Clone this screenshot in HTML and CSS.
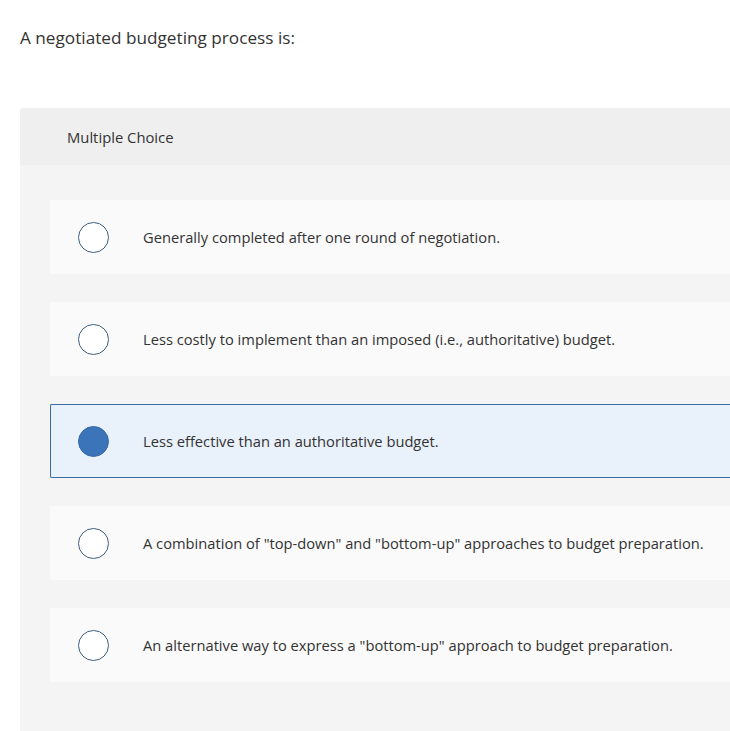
FILE: index.html
```html
<!DOCTYPE html>
<html>
<head>
<meta charset="utf-8">
<link rel="stylesheet" href="styles.css">
</head>
<body>
<p class="question">A negotiated budgeting process is:</p>
<section class="panel">
  <header class="panel-head">Multiple Choice</header>
  <div class="choices">
    <div class="choice"><span class="radio"></span><span class="label">Generally completed after one round of negotiation.</span></div>
    <div class="choice"><span class="radio"></span><span class="label">Less costly to implement than an imposed (i.e., authoritative) budget.</span></div>
    <div class="choice selected"><span class="radio"></span><span class="label">Less effective than an authoritative budget.</span></div>
    <div class="choice"><span class="radio"></span><span class="label">A combination of "top-down" and "bottom-up" approaches to budget preparation.</span></div>
    <div class="choice"><span class="radio"></span><span class="label">An alternative way to express a "bottom-up" approach to budget preparation.</span></div>
  </div>
</section>
</body>
</html>
```
FILE: styles.css
```css
html, body {
  margin: 0;
  padding: 0;
  background: #ffffff;
  font-family: "Open Sans", "Liberation Sans", sans-serif;
  color: #333333;
}
.question {
  margin: 26px 0 0 20px;
  font-size: 17.2px;
  line-height: 24px;
}
.panel {
  margin: 58px 0 0 20px;
  background: #f4f4f4;
  border-radius: 3px 0 0 0;
  padding-bottom: 60px;
}
.panel-head {
  height: 57px;
  display: flex;
  align-items: center;
  padding-left: 47px;
  background: #efefef;
  font-size: 14.8px;
  border-radius: 3px 0 0 0;
}
.choices {
  display: flex;
  flex-direction: column;
  gap: 28px;
  padding: 35px 0 0 30px;
}
.choice {
  height: 74px;
  box-sizing: border-box;
  display: flex;
  align-items: center;
  background: #fafafa;
  padding-left: 28px;
  font-size: 14.7px;
  border-radius: 2px 0 0 2px;
  white-space: nowrap;
  overflow: hidden;
}
.choice.selected {
  background: #e9f1fa;
  border: 1px solid #3a6ea3;
  border-right: none;
  padding-left: 27px;
}
.radio {
  width: 31px;
  height: 31px;
  box-sizing: border-box;
  border: 1.5px solid #3f5e7e;
  border-radius: 50%;
  background: #ffffff;
  flex: none;
}
.selected .radio {
  background: #3b74b9;
  border-color: #356aa8;
}
.label {
  margin-left: 34px;
}
```
